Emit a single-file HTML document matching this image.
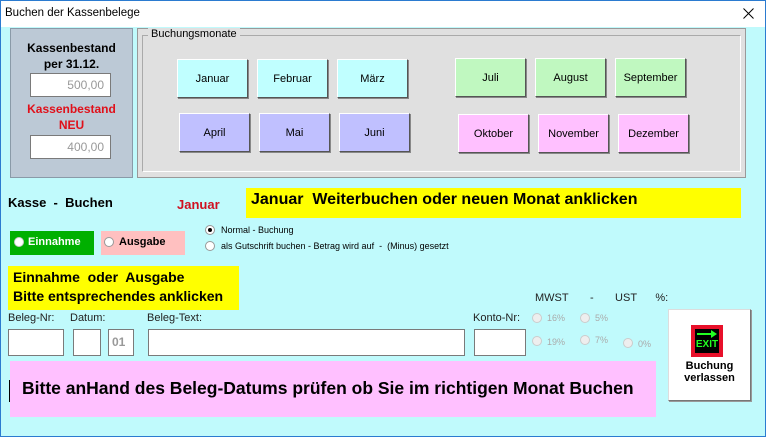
<!DOCTYPE html>
<html><head><meta charset="utf-8"><style>
*{margin:0;padding:0;box-sizing:border-box}
body{width:766px;height:437px;overflow:hidden;background:#c0fafc;font-family:"Liberation Sans",sans-serif;position:relative;font-size:11px;color:#000}
.a{position:absolute;white-space:nowrap}
.box{position:absolute;background:#fff;border:1px solid #7a7a7a}
.btn{position:absolute;width:71px;height:39px;border:1px solid;border-color:#fff #555 #555 #fff;box-shadow:1px 1px 0 #888;display:flex;align-items:center;justify-content:center;font-size:11px}
.c{background:#c0ffff}.p{background:#c0c0ff}.g{background:#c0f8c0}.k{background:#ffc0ff}
.rad{position:absolute;width:10px;height:10px;border-radius:50%;background:#fff;border:1px solid #999}
.lbl{position:absolute;font-size:11px;color:#222}
.pct{position:absolute;font-size:9px;color:#aaa}
</style></head><body>
<div class="a" style="left:0;top:0;width:766px;height:437px;border:1px solid #2b7bd0"></div>
<div class="a" style="left:1px;top:1px;width:764px;height:26px;background:#fff"></div>
<div class="a" style="left:5px;top:7px;font-size:11.5px">Buchen der Kassenbelege</div>
<svg class="a" style="left:743px;top:8px" width="11" height="11"><path d="M0.5 0.5L10.5 10.5M10.5 0.5L0.5 10.5" stroke="#000" stroke-width="1"/></svg>

<div class="a" style="left:10px;top:28px;width:123px;height:150px;background:#bcc9d6;border:1px solid #8a9aa8"></div>
<div class="a" style="left:10px;top:40px;width:123px;text-align:center;font-weight:bold;font-size:12px;line-height:16px">Kassenbestand<br>per 31.12.</div>
<div class="box" style="left:30px;top:73px;width:81px;height:24px;color:#999;text-align:right;padding:4px 6px;font-size:12px">500,00</div>
<div class="a" style="left:10px;top:101px;width:123px;text-align:center;font-weight:bold;font-size:12px;line-height:16px;color:#e0101a">Kassenbestand<br>NEU</div>
<div class="box" style="left:30px;top:135px;width:81px;height:24px;color:#999;text-align:right;padding:4px 6px;font-size:12px">400,00</div>

<div class="a" style="left:137px;top:28px;width:609px;height:150px;background:#e0e0e0;border:1px solid #999"></div>
<div class="a" style="left:142px;top:35px;width:599px;height:137px;border:1px solid #aaa;border-right-color:#fff;border-bottom-color:#fff"></div>
<div class="a" style="left:148px;top:28px;background:#e0e0e0;padding:0 3px;font-size:11px">Buchungsmonate</div>

<div class="btn c" style="left:177px;top:59px">Januar</div>
<div class="btn c" style="left:257px;top:59px">Februar</div>
<div class="btn c" style="left:337px;top:59px">März</div>
<div class="btn p" style="left:179px;top:113px">April</div>
<div class="btn p" style="left:259px;top:113px">Mai</div>
<div class="btn p" style="left:339px;top:113px">Juni</div>
<div class="btn g" style="left:455px;top:58px">Juli</div>
<div class="btn g" style="left:535px;top:58px">August</div>
<div class="btn g" style="left:615px;top:58px">September</div>
<div class="btn k" style="left:458px;top:114px">Oktober</div>
<div class="btn k" style="left:538px;top:114px">November</div>
<div class="btn k" style="left:618px;top:114px">Dezember</div>

<div class="a" style="left:8px;top:195px;font-weight:bold;font-size:13px">Kasse&nbsp; -&nbsp; Buchen</div>
<div class="a" style="left:177px;top:197px;font-weight:bold;font-size:13px;color:#d01020">Januar</div>
<div class="a" style="left:246px;top:188px;width:495px;height:30px;background:#ffff00;padding:3px 0 0 5px;font-weight:bold;font-size:16px">Januar&nbsp; Weiterbuchen oder neuen Monat anklicken</div>

<div class="a" style="left:10px;top:231px;width:84px;height:24px;background:#00b000;color:#fff;font-weight:bold;font-size:11px;padding:5px 0 0 18px">Einnahme</div>
<div class="rad" style="left:14px;top:237px;border-color:#ccc"></div>
<div class="a" style="left:101px;top:231px;width:84px;height:24px;background:#ffc0c0;font-weight:bold;font-size:11px;padding:5px 0 0 18px">Ausgabe</div>
<div class="rad" style="left:104px;top:237px"></div>
<div class="rad" style="left:205px;top:225px"><div class="a" style="left:2px;top:2px;width:4px;height:4px;border-radius:50%;background:#000"></div></div>
<div class="a" style="left:221px;top:225px;font-size:9px">Normal - Buchung</div>
<div class="rad" style="left:205px;top:241px"></div>
<div class="a" style="left:221px;top:241px;font-size:9px">als Gutschrift buchen - Betrag wird auf&nbsp; -&nbsp; (Minus) gesetzt</div>

<div class="a" style="left:8px;top:266px;width:231px;height:44px;background:#ffff00;padding:2px 0 0 5px;font-weight:bold;font-size:14px;line-height:19px">Einnahme&nbsp; oder&nbsp; Ausgabe<br>Bitte entsprechendes anklicken</div>

<div class="lbl" style="left:8px;top:312px">Beleg-Nr:</div>
<div class="lbl" style="left:70px;top:312px">Datum:</div>
<div class="lbl" style="left:147px;top:312px">Beleg-Text:</div>
<div class="lbl" style="left:473px;top:312px">Konto-Nr:</div>
<div class="lbl" style="left:535px;top:292px">MWST&nbsp;&nbsp;&nbsp;&nbsp;&nbsp;&nbsp; -&nbsp;&nbsp;&nbsp;&nbsp;&nbsp;&nbsp; UST&nbsp;&nbsp;&nbsp;&nbsp;&nbsp; %:</div>

<div class="box" style="left:8px;top:329px;width:56px;height:27px"></div>
<div class="box" style="left:73px;top:329px;width:28px;height:27px"></div>
<div class="box" style="left:108px;top:329px;width:26px;height:27px;color:#999;font-weight:bold;font-size:12px;padding:5px 0 0 3px">01</div>
<div class="box" style="left:148px;top:329px;width:317px;height:27px"></div>
<div class="box" style="left:474px;top:329px;width:52px;height:27px"></div>

<div class="rad" style="left:532px;top:313px;border-color:#ccc;background:#eee"></div><div class="pct" style="left:547px;top:313px">16%</div>
<div class="rad" style="left:580px;top:313px;border-color:#ccc;background:#eee"></div><div class="pct" style="left:595px;top:313px">5%</div>
<div class="rad" style="left:532px;top:336px;border-color:#ccc;background:#eee"></div><div class="pct" style="left:547px;top:337px">19%</div>
<div class="rad" style="left:580px;top:335px;border-color:#ccc;background:#eee"></div><div class="pct" style="left:595px;top:335px">7%</div>
<div class="rad" style="left:623px;top:338px;border-color:#ccc;background:#eee"></div><div class="pct" style="left:638px;top:339px">0%</div>

<div class="a" style="left:10px;top:361px;width:646px;height:56px;background:#ffc0ff;padding:17px 0 0 12px;font-weight:bold;font-size:17.5px">Bitte anHand des Beleg-Datums prüfen ob Sie im richtigen Monat Buchen</div>
<div class="a" style="left:9px;top:380px;width:1px;height:22px;background:#000"></div>

<div class="a" style="left:668px;top:309px;width:83px;height:92px;background:#fff;border:1px solid;border-color:#ddd #777 #777 #ddd;box-shadow:1px 1px 0 #999"></div>
<div class="a" style="left:691px;top:325px;width:32px;height:32px;background:#e8102a"></div>
<div class="a" style="left:695px;top:329px;width:24px;height:24px;background:#000"></div>
<div class="a" style="left:697px;top:333px;width:16px;height:2px;background:#2f2"></div>
<div class="a" style="left:711px;top:330px;width:0;height:0;border-left:6px solid #2f2;border-top:4px solid transparent;border-bottom:4px solid transparent"></div>
<div class="a" style="left:695px;top:339px;width:24px;color:#2f2;font-size:10px;font-weight:bold;text-align:center">EXIT</div>
<div class="a" style="left:668px;top:360px;width:83px;text-align:center;font-weight:bold;font-size:11px;line-height:12px">Buchung<br>verlassen</div>
</body></html>
